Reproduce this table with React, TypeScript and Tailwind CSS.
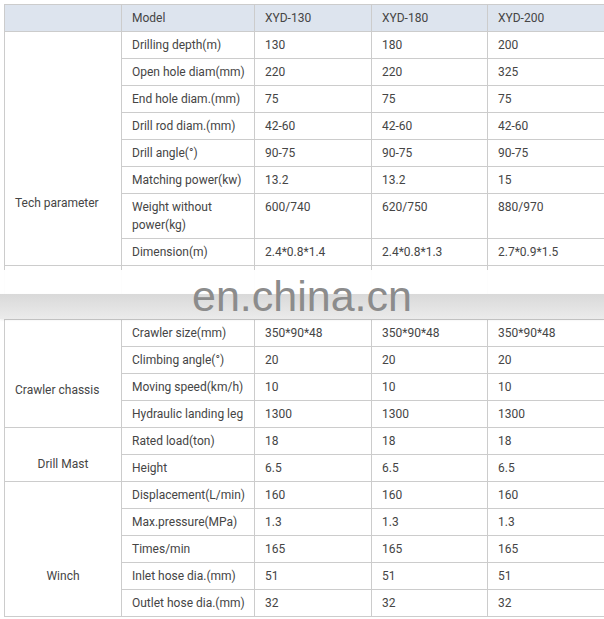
const models = ["XYD-130", "XYD-180", "XYD-200"];

type Group = {
  label: string;
  left?: boolean;
  pt: string;
  rows: [string, string, string, string][];
};

const groups: Group[] = [
  {
    label: "Tech parameter",
    left: true,
    pt: "pt-[162px]",
    rows: [
      ["Drilling depth(m)", "130", "180", "200"],
      ["Open hole diam(mm)", "220", "220", "325"],
      ["End hole diam.(mm)", "75", "75", "75"],
      ["Drill rod diam.(mm)", "42-60", "42-60", "42-60"],
      ["Drill angle(°)", "90-75", "90-75", "90-75"],
      ["Matching power(kw)", "13.2", "13.2", "15"],
      ["Weight without power(kg)", "600/740", "620/750", "880/970"],
      ["Dimension(m)", "2.4*0.8*1.4", "2.4*0.8*1.3", "2.7*0.9*1.5"],
    ],
  },
  {
    label: "Crawler chassis",
    left: true,
    pt: "pt-[61px]",
    rows: [
      ["Crawler size(mm)", "350*90*48", "350*90*48", "350*90*48"],
      ["Climbing angle(°)", "20", "20", "20"],
      ["Moving speed(km/h)", "10", "10", "10"],
      ["Hydraulic landing leg", "1300", "1300", "1300"],
    ],
  },
  {
    label: "Drill Mast",
    pt: "pt-[27px]",
    rows: [
      ["Rated load(ton)", "18", "18", "18"],
      ["Height", "6.5", "6.5", "6.5"],
    ],
  },
  {
    label: "Winch",
    pt: "pt-[85px]",
    rows: [
      ["Displacement(L/min)", "160", "160", "160"],
      ["Max.pressure(MPa)", "1.3", "1.3", "1.3"],
      ["Times/min", "165", "165", "165"],
      ["Inlet hose dia.(mm)", "51", "51", "51"],
      ["Outlet hose dia.(mm)", "32", "32", "32"],
    ],
  },
];

const cell = "border border-[#cccccc] pl-[10px] pr-[4px] py-[4px] leading-[18px] align-top";

function Watermark() {
  return (
    <div className="absolute left-0 top-[270px] w-[604px] h-[49px] pointer-events-none">
      <div className="h-[24px] bg-white/95"></div>
      <div className="h-[25px] bg-gradient-to-b from-[#d9d9d9] to-[#ebebeb] shadow-[0_1px_2px_rgba(0,0,0,0.08)]"></div>
      <div
        className="absolute left-0 right-0 top-[2px] text-center text-[43px] leading-[48px] text-[#8c8c8c]"
        style={{ fontFamily: '"Liberation Sans", Arial, sans-serif' }}
      >
        en.china.cn
      </div>
    </div>
  );
}

export default function App() {
  return (
    <div
      className="relative w-[604px] h-[619px] bg-white pt-[4px] pl-[4px] text-[12px] text-[#454545] overflow-hidden"
      style={{ fontFamily: "Roboto, 'Liberation Sans', sans-serif" }}
    >
      <table className="table-fixed border-collapse w-[600px]">
        <colgroup>
          <col className="w-[117px]" />
          <col className="w-[133px]" />
          <col className="w-[117px]" />
          <col className="w-[116px]" />
          <col className="w-[117px]" />
        </colgroup>
        <tbody>
          <tr className="bg-[#dde4ee]">
            <td className={cell}></td>
            <td className={cell}>Model</td>
            {models.map((m) => (
              <td key={m} className={cell}>
                {m}
              </td>
            ))}
          </tr>
          {groups.map((g, gi) => (
            <>
              {g.rows.map((r, ri) => (
                <tr key={`${gi}-${ri}`}>
                  {ri === 0 && (
                    <td
                      rowSpan={g.rows.length}
                      className={`border border-[#cccccc] align-top leading-[18px] ${g.pt} ${
                        g.left ? "pl-[10px] text-left" : "text-center"
                      }`}
                    >
                      {g.label}
                    </td>
                  )}
                  {r.map((v, vi) => (
                    <td key={vi} className={cell}>
                      {v}
                    </td>
                  ))}
                </tr>
              ))}
              {gi === 0 && (
                <tr key="blank">
                  {[0, 1, 2, 3, 4].map((i) => (
                    <td key={i} className="border border-[#cccccc] h-[54px]"></td>
                  ))}
                </tr>
              )}
            </>
          ))}
        </tbody>
      </table>
      <Watermark />
    </div>
  );
}
